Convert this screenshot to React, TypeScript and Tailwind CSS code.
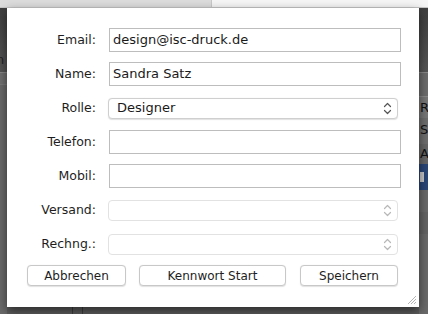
import React from "react";

const font = { fontFamily: '"DejaVu Sans", "Lucida Grande", sans-serif' };

function Chevrons({ disabled }: { disabled?: boolean }) {
  const c = disabled ? "#b8b8b8" : "#555";
  return (
    <svg width="9" height="13" viewBox="0 0 9 13" fill="none">
      <path d="M1.5 4.5 L4.5 1.5 L7.5 4.5" stroke={c} strokeWidth="1.2" strokeLinecap="round" strokeLinejoin="round" />
      <path d="M1.5 8.5 L4.5 11.5 L7.5 8.5" stroke={c} strokeWidth="1.2" strokeLinecap="round" strokeLinejoin="round" />
    </svg>
  );
}

function Row({ label, children }: { label: string; children: React.ReactNode }) {
  return (
    <div className="flex h-[34px] items-center">
      <div className="w-[89px] shrink-0 text-right text-[12.5px] text-[#1e1e1e]">{label}</div>
      <div className="ml-[13px] flex-1 flex items-center">{children}</div>
    </div>
  );
}

function TextInput({ value }: { value?: string }) {
  return (
    <div className="h-[24px] w-full border border-[#bdbdbd] bg-white px-[3px] flex items-center text-[13px] text-[#1a1a1a]">
      {value}
    </div>
  );
}

function Select({ value, disabled }: { value?: string; disabled?: boolean }) {
  return (
    <div
      className={
        "ml-[-1px] mr-[3px] h-[21px] w-full rounded-[4px] border bg-white flex items-center justify-between pl-[8px] pr-[5px] text-[13px] text-[#1a1a1a] " +
        (disabled ? "border-[#e2e2e2]" : "border-[#cfcfcf] shadow-[0_0.5px_1px_rgba(0,0,0,0.12)]")
      }
    >
      <span>{value}</span>
      <Chevrons disabled={disabled} />
    </div>
  );
}

function Btn({ label, w }: { label: string; w: string }) {
  return (
    <div
      className={
        w +
        " h-[21px] rounded-[4px] border border-[#c8c8c8] bg-white flex items-center justify-center text-[12px] text-[#1e1e1e] shadow-[0_0.5px_1px_rgba(0,0,0,0.12)]"
      }
    >
      {label}
    </div>
  );
}

export default function App() {
  return (
    <div className="relative w-[428px] h-[314px] overflow-hidden bg-[#5e5e5e]" style={font}>
      {/* top bar */}
      <div className="flex h-[8px] border-b border-[#c6c6c6]">
        <div className="w-[212px] bg-[#dcdcdc] border-r border-[#c8c8c8]" />
        <div className="flex-1 bg-[#f5f5f5]" />
      </div>
      {/* background left strip */}
      <div className="absolute left-0 top-[8px] w-[7px] h-[306px] flex flex-col">
        <div className="h-[64px] bg-gradient-to-b from-[#3f3f3f] to-[#555] text-[13px] text-[#222] pt-[42px] overflow-hidden">
          <span className="ml-[-4px]">n</span>
        </div>
        <div className="h-[12px] bg-[#707070] border-t border-[#888]" />
        <div className="flex-1 bg-[#6a6a6a] border-t border-[#7a7a7a]" />
      </div>
      {/* background right strip */}
      <div className="absolute left-[419px] top-[8px] w-[9px] h-[306px] flex flex-col text-[13px] text-[#111] overflow-hidden">
        <div className="h-[64px] bg-gradient-to-b from-[#3f3f3f] to-[#555]" />
        <div className="h-[24px] bg-[#6d6d6d] border-t border-[#8a8a8a]" />
        <div className="h-[22px] bg-[#777] border-t border-[#8a8a8a] pl-[1px] leading-[22px]">R</div>
        <div className="h-[26px] bg-[#6e6e6e] pl-[1px] leading-[24px]">S</div>
        <div className="h-[20px] bg-[#666] pl-[1px] leading-[20px]">A</div>
        <div className="h-[26px] bg-[#2a4777]">
          <div className="mt-[8px] ml-[1px] w-[4px] h-[10px] bg-[#c8c8c8]" />
        </div>
        <div className="h-[22px] bg-[#6a6a6a]" />
        <div className="h-[22px] bg-[#646464]" />
        <div className="flex-1 bg-[#6a6a6a]" />
      </div>
      {/* bottom dividers */}
      <div className="absolute left-[72px] top-[300px] h-[14px] w-[11px] border-x border-[#3e3e3e]" />

      {/* dialog */}
      <div className="absolute left-[7px] top-[8px] w-[412px] h-[299px] bg-white shadow-[0_4px_10px_rgba(0,0,0,0.55)] pt-[15px] pr-[18px]">
        <Row label="Email:">
          <TextInput value="design@isc-druck.de" />
        </Row>
        <Row label="Name:">
          <TextInput value="Sandra Satz" />
        </Row>
        <Row label="Rolle:">
          <Select value="Designer" />
        </Row>
        <Row label="Telefon:">
          <TextInput />
        </Row>
        <Row label="Mobil:">
          <TextInput />
        </Row>
        <Row label="Versand:">
          <Select disabled />
        </Row>
        <Row label="Rechng.:">
          <Select disabled />
        </Row>
        <div className="flex items-center mt-[4px] pl-[20px]">
          <Btn label="Abbrechen" w="w-[99px]" />
          <div className="ml-[13px]">
            <Btn label="Kennwort Start" w="w-[147px]" />
          </div>
          <div className="ml-[14px]">
            <Btn label="Speichern" w="w-[98px]" />
          </div>
        </div>
        <svg className="absolute right-[2px] bottom-[2px]" width="10" height="10" viewBox="0 0 10 10">
          <path d="M9 1 L1 9 M9 4 L4 9 M9 7 L7 9" stroke="#b5b5b5" strokeWidth="1" />
        </svg>
      </div>
    </div>
  );
}
